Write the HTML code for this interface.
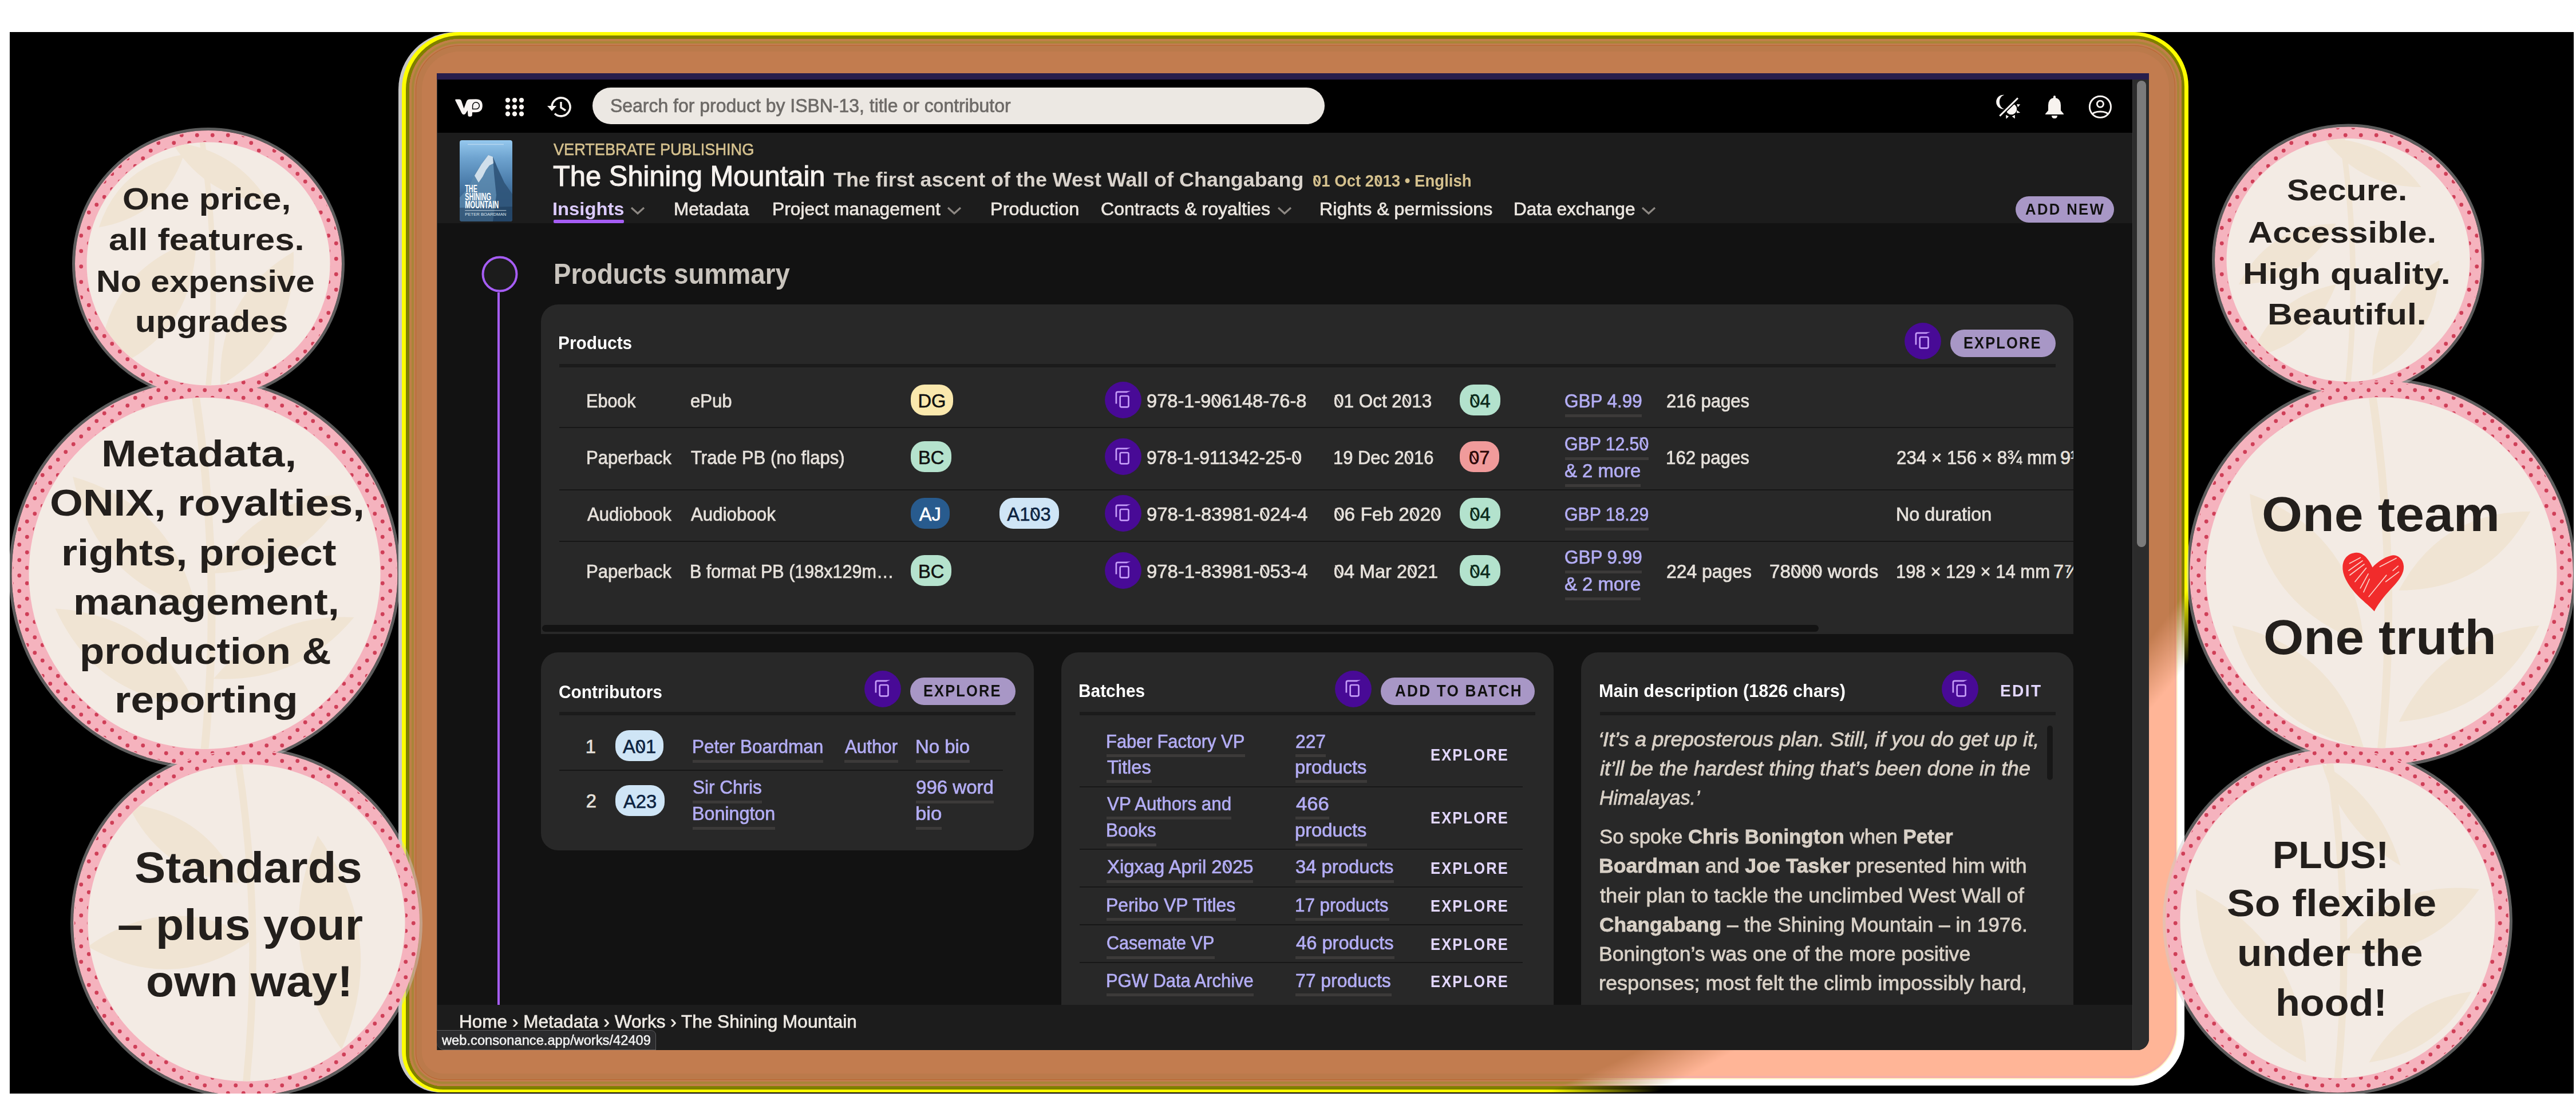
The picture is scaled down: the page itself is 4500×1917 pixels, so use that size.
<!DOCTYPE html>
<html><head><meta charset="utf-8"><title>Consonance</title>
<style>
html,body{margin:0;padding:0}
body{width:4500px;height:1917px;position:relative;overflow:hidden;background:#fff;font-family:"Liberation Sans",sans-serif}
.r,.t,.c{position:absolute}
.t{white-space:nowrap;transform-origin:0 0}
.c{white-space:nowrap}
b{font-weight:700}
.z{position:relative}
.z::after{content:"";position:absolute;left:0.255em;top:0.5em;width:0.075em;height:0.6em;margin-left:-0.0375em;margin-top:-0.3em;background:currentColor;transform:rotate(-33deg)}
</style></head><body>
<div class="r" style="left:17px;top:56px;width:4479px;height:1855px;background:#000"></div>
<div class="r" style="left:702px;top:56px;width:3121px;height:1853px;border-radius:100px 95px 70px 72px;background:#ffff00;box-shadow:-6px 0 0 rgba(220,220,220,0.9)"></div>
<div class="r" style="left:709px;top:62px;width:3107px;height:1842px;border-radius:94px 89px 64px 65px;background:#7f7f00"></div>
<div class="r" style="left:715px;top:68px;width:3096px;height:1830px;border-radius:88px 83px 58px 58px;background:#c27c4f;box-shadow:inset 0 0 0 4px #c08048, inset 0 0 0 8px #a98538, inset 0 0 0 11px #c27c4f, inset 0 0 0 12px #b8652f, inset 0 0 0 22px #bb7a4b"></div>
<div class="r" style="left:600px;top:0px;width:3300px;height:1917px;-webkit-mask-image:radial-gradient(circle 2694px at 1109px -511px, transparent 2614px, #000 2694px);mask-image:radial-gradient(circle 2694px at 1109px -511px, transparent 2614px, #000 2694px);">
<div class="r" style="left:96px;top:56px;width:3230px;height:1855px;background:#000"></div>
<div class="r" style="left:96px;top:56px;width:3120px;height:1841px;border-radius:90px;background:#fff"></div>
<div class="r" style="left:102px;top:60px;width:3102px;height:1826px;border-radius:86px;background:#fff6c8"></div>
<div class="r" style="left:104px;top:62px;width:3098px;height:1822px;border-radius:84px;background:#f7b0a6"></div>
<div class="r" style="left:108px;top:66px;width:3091px;height:1814px;border-radius:80px;background:#ffb597"></div>
</div>
<div class="r" style="left:763px;top:128px;width:2991px;height:1707px;background:#121212;border-bottom-right-radius:20px;overflow:hidden">
<div class="r" style="left:0.00px;top:0.00px;width:2991.00px;height:11.00px;background:#271e4c;"></div>
<div class="r" style="left:0.00px;top:11.00px;width:2991.00px;height:93.00px;background:#000;"></div>
<div class="r" style="left:0.00px;top:104.00px;width:2962.00px;height:158.00px;background:#1c1c1c;"></div>
<div class="r" style="left:0.00px;top:1628.00px;width:2962.00px;height:79.00px;background:#1c1c1c;"></div>
<div class="r" style="left:2962.00px;top:11.00px;width:29.00px;height:1696.00px;background:#2c2c2c;border-left:1px solid #383838;"></div>
<div class="r" style="left:2970.00px;top:13.00px;width:16.00px;height:815.00px;background:#7b7b7b;border-radius:8px;"></div>
<div class="r" style="left:0.00px;top:11.00px;width:1.00px;height:1696.00px;background:#3a3a3a;"></div>
</div>
<svg class="r" style="left:793px;top:170px" width="54" height="38" viewBox="0 0 54 38"><path d="M2.6 6 Q1.2 3.6 4 3.6 L9.5 3.6 Q12 3.6 13 6.2 L17.4 19.6 L21.8 7.6 Q23.4 3.4 27.5 3.4 L38.5 3.3 Q49.8 3.3 49.8 14.8 Q49.8 26.2 38 26.2 L32 26.2 L31.8 31 Q31.6 33.8 28.6 33.8 L27 33.8 Q24.6 33.8 24.4 31 L23.8 22.9 L20.3 28.6 Q19 30.4 16.8 30.2 Q14.6 30 13.6 27.8 Z" fill="#f8f4f2"/><path d="M32.6 20.6 L32.6 14.6 A5.9 5.9 0 1 1 38.5 20.6 Z" fill="none" stroke="#000" stroke-width="1.5"/></svg>
<svg class="r" style="left:883px;top:171px" width="34" height="34" viewBox="0 0 34 34" fill="#f7f3ef"><circle cx="4" cy="4" r="4.2"/><circle cx="4" cy="16" r="4.2"/><circle cx="4" cy="28" r="4.2"/><circle cx="16" cy="4" r="4.2"/><circle cx="16" cy="16" r="4.2"/><circle cx="16" cy="28" r="4.2"/><circle cx="28" cy="4" r="4.2"/><circle cx="28" cy="16" r="4.2"/><circle cx="28" cy="28" r="4.2"/></svg>
<svg class="r" style="left:955px;top:167px" width="46" height="40" viewBox="0 0 46 40"><path d="M9 20 A16 16 0 1 1 14 31.5" fill="none" stroke="#f7f3ef" stroke-width="3.6"/><path d="M1 18 L9 27 L17 18 Z" fill="#f7f3ef"/><path d="M25 11 L25 21 L33 26" fill="none" stroke="#f7f3ef" stroke-width="3.4"/></svg>
<div class="r" style="left:1035.00px;top:153.00px;width:1279.00px;height:64.00px;background:#ece8e3;border-radius:32px;"></div>
<div id="t1" class="t" style="left:1066.03px;top:167.66px;font-size:32.994px;line-height:32.994px;color:#6d6a67;font-weight:400;transform:scaleX(0.9685);-webkit-text-stroke-width:0.73px;"><span>Search for product by ISBN-13, title or contributor</span></div>
<svg class="r" style="left:3485px;top:163px" width="48" height="48" viewBox="0 0 48 48"><path d="M16.2 2.8 A12.45 12.45 0 1 0 16.2 27.5 A13.28 13.28 0 0 1 16.2 2.8 Z" fill="#f8f4f2"/><clipPath id="sunc"><path d="M10.4 41.7 L42.1 10.5 L60 30 L30 60 Z"/></clipPath><circle cx="28.6" cy="27.6" r="9.6" fill="#f8f4f2" clip-path="url(#sunc)"/><path d="M8.3 39.6 L40 8.4" stroke="#000" stroke-width="6.4"/><path d="M8.3 39.6 L40 8.4" stroke="#f8f4f2" stroke-width="2.9"/><path d="M38.1 19.1 L44.2 19.6 L40 24.3 Z M38.1 29.4 L44.2 34 L38.1 34.5 Z M19 37.8 L24.1 40.6 L19.5 44.8 Z M29.7 40.6 L34.8 37.8 L34.8 44.3 Z" fill="#f8f4f2"/></svg>
<svg class="r" style="left:3571px;top:166px" width="36" height="42" viewBox="0 0 36 42"><path d="M18 1 Q20 1 20 3 L20 5 Q29 7 29 18 L29 27 L34 33 L34 34 L2 34 L2 33 L7 27 L7 18 Q7 7 16 5 L16 3 Q16 1 18 1 Z" fill="#f7f3ef"/><path d="M13 36 L23 36 Q23 41 18 41 Q13 41 13 36 Z" fill="#f7f3ef"/></svg>
<svg class="r" style="left:3646px;top:165px" width="46" height="44" viewBox="0 0 46 44"><defs><clipPath id="ucl"><circle cx="22.9" cy="21.8" r="18.6"/></clipPath></defs><circle cx="22.9" cy="21.8" r="18.6" fill="none" stroke="#f8f4f2" stroke-width="2.9"/><circle cx="22.9" cy="16.7" r="5.6" fill="none" stroke="#f8f4f2" stroke-width="2.9"/><ellipse cx="22.9" cy="35.2" rx="13.8" ry="5.2" fill="none" stroke="#f8f4f2" stroke-width="2.9" clip-path="url(#ucl)"/></svg>
<div class="r" style="left:803px;top:245px;width:92px;height:142px;border-radius:4px;overflow:hidden;background:linear-gradient(180deg,#95c8ee 0%,#6ea3cf 22%,#4d7fad 50%,#345f8a 75%,#21456a 100%)"><svg width="92" height="142" viewBox="0 0 92 142" style="position:absolute;left:0;top:0"><path d="M0 142 L0 100 L15 84 L28 56 L42 36 L50 26 L58 29 L66 48 L78 74 L92 94 L92 142 Z" fill="#5d89ae" opacity="0.8"/><path d="M26 62 L38 42 L50 26 L58 29 L60 40 L52 44 L46 52 L40 64 L33 74 Z" fill="#e4edf5" opacity="0.85"/><path d="M58 29 L66 48 L78 74 L92 94 L92 142 L58 142 L64 96 L60 58 Z" fill="#24486d" opacity="0.75"/><path d="M0 118 L92 116 L92 142 L0 142 Z" fill="#183250" opacity="0.45"/><rect x="14" y="6.5" width="63" height="1.6" fill="#d6e6f4" opacity="0.55"/><text x="9.3" y="90.5" font-family="Liberation Sans" font-weight="700" font-size="17.5" fill="#fff" textLength="21.5" lengthAdjust="spacingAndGlyphs">THE</text><text x="9.3" y="105" font-family="Liberation Sans" font-weight="700" font-size="17.5" fill="#fff" textLength="45.7" lengthAdjust="spacingAndGlyphs">SHINING</text><text x="9.3" y="119" font-family="Liberation Sans" font-weight="700" font-size="17.5" fill="#fff" textLength="59" lengthAdjust="spacingAndGlyphs">MOUNTAIN</text><rect x="9.3" y="122" width="72" height="1.5" fill="#dfe8f0" opacity="0.6"/><text x="9.3" y="132" font-family="Liberation Sans" font-size="7" fill="#dfe8f0" textLength="72" lengthAdjust="spacingAndGlyphs">PETER BOARDMAN</text></svg></div>
<div id="t2" class="t" style="left:967.00px;top:246.79px;font-size:29.070px;line-height:29.070px;color:#d5c18e;font-weight:400;transform:scaleX(0.9336);-webkit-text-stroke-width:0.64px;"><span>VERTEBRATE PUBLISHING</span></div>
<div id="t3" class="t" style="left:966.02px;top:284.39px;font-size:49.855px;line-height:49.855px;color:#f6f2ee;font-weight:400;transform:scaleX(0.9805);-webkit-text-stroke:1.1px #f6f2ee;"><span>The Shining Mountain</span></div>
<div id="t4" class="t" style="left:1456.00px;top:297.06px;font-size:34.884px;line-height:34.884px;color:#d9d3cc;font-weight:700;transform:scaleX(1.0289);"><span>The first ascent of the West Wall of Changabang</span></div>
<div id="t5" class="t" style="left:2293.05px;top:302.39px;font-size:29.070px;line-height:29.070px;color:#d5c18e;font-weight:700;transform:scaleX(0.9478);"><span><span class="z">0</span>1 Oct 2<span class="z">0</span>13 • English</span></div>
<div id="t6" class="t" style="left:964.91px;top:349.92px;font-size:31.395px;line-height:31.395px;color:#dccbff;font-weight:700;transform:scaleX(1.0439);"><span>Insights</span></div>
<div class="r" style="left:967.00px;top:384.00px;width:123.00px;height:6.00px;background:#a65df5;border-radius:2px;"></div>
<svg class="r" style="left:1101px;top:360px" width="26" height="16" viewBox="0 0 26 16"><path d="M2 3 L13 13 L24 3" fill="none" stroke="#8d8883" stroke-width="3.2"/></svg>
<div id="t7" class="t" style="left:1177.49px;top:349.92px;font-size:31.395px;line-height:31.395px;color:#ebe6e0;font-weight:400;transform:scaleX(1.0048);-webkit-text-stroke-width:0.69px;"><span>Metadata</span></div>
<div id="t8" class="t" style="left:1348.97px;top:349.92px;font-size:31.395px;line-height:31.395px;color:#ebe6e0;font-weight:400;transform:scaleX(1.0147);-webkit-text-stroke-width:0.69px;"><span>Project management</span></div>
<svg class="r" style="left:1654px;top:360px" width="26" height="16" viewBox="0 0 26 16"><path d="M2 3 L13 13 L24 3" fill="none" stroke="#8d8883" stroke-width="3.2"/></svg>
<div id="t9" class="t" style="left:1729.93px;top:349.92px;font-size:31.395px;line-height:31.395px;color:#ebe6e0;font-weight:400;transform:scaleX(1.0358);-webkit-text-stroke-width:0.69px;"><span>Production</span></div>
<div id="t10" class="t" style="left:1923.48px;top:349.92px;font-size:31.395px;line-height:31.395px;color:#ebe6e0;font-weight:400;transform:scaleX(1.0224);-webkit-text-stroke-width:0.69px;"><span>Contracts &amp; royalties</span></div>
<svg class="r" style="left:2231px;top:360px" width="26" height="16" viewBox="0 0 26 16"><path d="M2 3 L13 13 L24 3" fill="none" stroke="#8d8883" stroke-width="3.2"/></svg>
<div id="t11" class="t" style="left:2304.95px;top:349.92px;font-size:31.395px;line-height:31.395px;color:#ebe6e0;font-weight:400;transform:scaleX(1.0260);-webkit-text-stroke-width:0.69px;"><span>Rights &amp; permissions</span></div>
<div id="t12" class="t" style="left:2643.99px;top:349.92px;font-size:31.395px;line-height:31.395px;color:#ebe6e0;font-weight:400;transform:scaleX(1.0066);-webkit-text-stroke-width:0.69px;"><span>Data exchange</span></div>
<svg class="r" style="left:2867px;top:360px" width="26" height="16" viewBox="0 0 26 16"><path d="M2 3 L13 13 L24 3" fill="none" stroke="#8d8883" stroke-width="3.2"/></svg>
<div class="r" style="left:3521.00px;top:343.00px;width:172.00px;height:46.00px;background:#a897c6;border-radius:23px;"></div>
<div id="t13" class="t" style="left:3537.60px;top:352.93px;font-size:26.890px;line-height:26.890px;color:#121212;font-weight:700;letter-spacing:2.50px;transform:scaleX(0.9539);"><span>ADD NEW</span></div>
<svg class="r" style="left:835px;top:441px" width="76" height="76" viewBox="0 0 76 76"><circle cx="38" cy="38" r="29.5" fill="#1c1c1c" stroke="#a65df5" stroke-width="4"/></svg>
<div class="r" style="left:869.00px;top:511.00px;width:4.00px;height:1245.00px;background:#a65df5;"></div>
<div id="t14" class="t" style="left:966.91px;top:453.93px;font-size:50.872px;line-height:50.872px;color:#c9c4bd;font-weight:700;transform:scaleX(0.8959);"><span>Products summary</span></div>
<div class="r" style="left:945px;top:532px;width:2677px;height:576px;background:#282828;border-radius:30px 30px 0 0;overflow:hidden">
<div id="t15" class="t" style="left:30.14px;top:50.53px;font-size:31.977px;line-height:31.977px;color:#ffffff;font-weight:700;transform:scaleX(0.9324);"><span>Products</span></div>
<svg class="r" style="left:2381.6px;top:31.6px" width="64" height="64" viewBox="0 0 64 64"><circle cx="32" cy="32" r="31.9" fill="#480a96"/><path d="M19.9 38.6 V20.6 Q19.9 17.9 22.6 17.9 H38.5" fill="none" stroke="#c59cf8" stroke-width="2.7"/><path d="M38 16.55 L45 16.3 L38 19.25 Z" fill="#c59cf8"/><rect x="26.7" y="25" width="14.8" height="19.3" rx="2.2" fill="none" stroke="#c59cf8" stroke-width="2.7"/></svg>
<div class="r" style="left:2462.00px;top:44.00px;width:184.00px;height:48.00px;background:#a897c6;border-radius:24px;"></div>
<div id="t16" class="t" style="left:2485.29px;top:51.77px;font-size:29.797px;line-height:29.797px;color:#121212;font-weight:700;letter-spacing:2.50px;transform:scaleX(0.8546);"><span>EXPLORE</span></div>
<div class="r" style="left:32.00px;top:104.00px;width:2614.00px;height:5.50px;background:#1b1b1b;"></div>
<div class="r" style="left:32.00px;top:213.50px;width:2645.00px;height:2.20px;background:#171717;"></div>
<div class="r" style="left:32.00px;top:322.50px;width:2645.00px;height:2.20px;background:#171717;"></div>
<div class="r" style="left:32.00px;top:413.00px;width:2645.00px;height:2.20px;background:#171717;"></div>
<div class="r" style="left:2.00px;top:560.00px;width:2230.00px;height:12.00px;background:#131313;border-radius:6px;"></div>
<div id="t17" class="t" style="left:79.13px;top:153.11px;font-size:32.703px;line-height:32.703px;color:#e6e1db;font-weight:400;transform:scaleX(0.9349);-webkit-text-stroke-width:0.72px;"><span>Ebook</span></div>
<div id="t18" class="t" style="left:260.55px;top:153.11px;font-size:32.703px;line-height:32.703px;color:#e6e1db;font-weight:400;transform:scaleX(0.9506);-webkit-text-stroke-width:0.72px;"><span>ePub</span></div>
<div class="r" style="left:646.00px;top:140.00px;width:74.00px;height:54.00px;background:#fae8ad;border-radius:24px;"></div><div class="c" style="left:646.0px;top:152.9px;width:74.0px;font-size:32.70px;line-height:32.70px;color:#111;text-align:center;-webkit-text-stroke-width:0.6px">DG</div>
<svg class="r" style="left:985.0px;top:135.0px" width="64" height="64" viewBox="0 0 64 64"><circle cx="32" cy="32" r="31.9" fill="#480a96"/><path d="M19.9 38.6 V20.6 Q19.9 17.9 22.6 17.9 H38.5" fill="none" stroke="#c59cf8" stroke-width="2.7"/><path d="M38 16.55 L45 16.3 L38 19.25 Z" fill="#c59cf8"/><rect x="26.7" y="25" width="14.8" height="19.3" rx="2.2" fill="none" stroke="#c59cf8" stroke-width="2.7"/></svg>
<div id="t19" class="t" style="left:1058.00px;top:153.11px;font-size:32.703px;line-height:32.703px;color:#e6e1db;font-weight:400;transform:scaleX(0.9985);-webkit-text-stroke-width:0.72px;"><span>978-1-9<span class="z">0</span>6148-76-8</span></div>
<div id="t20" class="t" style="left:1384.64px;top:153.11px;font-size:32.703px;line-height:32.703px;color:#e6e1db;font-weight:400;transform:scaleX(0.9617);-webkit-text-stroke-width:0.72px;"><span><span class="z">0</span>1 Oct 2<span class="z">0</span>13</span></div>
<div class="r" style="left:1605.00px;top:140.00px;width:71.00px;height:54.00px;background:#b3e2cd;border-radius:24px;"></div><div class="c" style="left:1605.0px;top:152.9px;width:71.0px;font-size:32.70px;line-height:32.70px;color:#0b2a1b;text-align:center;-webkit-text-stroke-width:0.6px"><span class="z">0</span>4</div>
<div id="t21" class="t" style="left:1787.84px;top:153.11px;font-size:32.703px;line-height:32.703px;color:#b3adf4;font-weight:400;transform:scaleX(0.9614);-webkit-text-stroke-width:0.72px;"><span>GBP 4.99</span></div>
<div class="r" style="left:1788.80px;top:191.80px;width:134.60px;height:5.00px;background:#3c3a39;"></div>
<div id="t22" class="t" style="left:1966.05px;top:153.11px;font-size:32.703px;line-height:32.703px;color:#e6e1db;font-weight:400;transform:scaleX(0.9495);-webkit-text-stroke-width:0.72px;"><span>216 pages</span></div>
<div id="t23" class="t" style="left:79.10px;top:252.31px;font-size:32.703px;line-height:32.703px;color:#e6e1db;font-weight:400;transform:scaleX(0.9520);-webkit-text-stroke-width:0.72px;"><span>Paperback</span></div>
<div id="t24" class="t" style="left:261.50px;top:252.31px;font-size:32.703px;line-height:32.703px;color:#e6e1db;font-weight:400;transform:scaleX(0.9521);-webkit-text-stroke-width:0.72px;"><span>Trade PB (no flaps)</span></div>
<div class="r" style="left:646.00px;top:239.20px;width:71.40px;height:54.00px;background:#b5e2cd;border-radius:24px;"></div><div class="c" style="left:646.0px;top:252.1px;width:71.4px;font-size:32.70px;line-height:32.70px;color:#111;text-align:center;-webkit-text-stroke-width:0.6px">BC</div>
<svg class="r" style="left:985.0px;top:234.2px" width="64" height="64" viewBox="0 0 64 64"><circle cx="32" cy="32" r="31.9" fill="#480a96"/><path d="M19.9 38.6 V20.6 Q19.9 17.9 22.6 17.9 H38.5" fill="none" stroke="#c59cf8" stroke-width="2.7"/><path d="M38 16.55 L45 16.3 L38 19.25 Z" fill="#c59cf8"/><rect x="26.7" y="25" width="14.8" height="19.3" rx="2.2" fill="none" stroke="#c59cf8" stroke-width="2.7"/></svg>
<div id="t25" class="t" style="left:1058.02px;top:252.31px;font-size:32.703px;line-height:32.703px;color:#e6e1db;font-weight:400;transform:scaleX(0.9772);-webkit-text-stroke-width:0.72px;"><span>978-1-911342-25-<span class="z">0</span></span></div>
<div id="t26" class="t" style="left:1383.71px;top:252.31px;font-size:32.703px;line-height:32.703px;color:#e6e1db;font-weight:400;transform:scaleX(0.9462);-webkit-text-stroke-width:0.72px;"><span>19 Dec 2<span class="z">0</span>16</span></div>
<div class="r" style="left:1605.00px;top:239.20px;width:68.50px;height:54.00px;background:#f09b9b;border-radius:24px;"></div><div class="c" style="left:1605.0px;top:252.1px;width:68.5px;font-size:32.70px;line-height:32.70px;color:#2a0707;text-align:center;-webkit-text-stroke-width:0.6px"><span class="z">0</span>7</div>
<div id="t27" class="t" style="left:1787.88px;top:227.81px;font-size:32.703px;line-height:32.703px;color:#b3adf4;font-weight:400;transform:scaleX(0.9240);-webkit-text-stroke-width:0.72px;"><span>GBP 12.5<span class="z">0</span></span></div>
<div class="r" style="left:1788.80px;top:266.50px;width:146.20px;height:5.00px;background:#3c3a39;"></div>
<div id="t28" class="t" style="left:1787.79px;top:274.81px;font-size:32.703px;line-height:32.703px;color:#b3adf4;font-weight:400;transform:scaleX(1.0050);-webkit-text-stroke-width:0.72px;"><span>&amp; 2 more</span></div>
<div class="r" style="left:1788.80px;top:313.50px;width:132.10px;height:5.00px;background:#3c3a39;"></div>
<div id="t29" class="t" style="left:1965.09px;top:252.31px;font-size:32.703px;line-height:32.703px;color:#e6e1db;font-weight:400;transform:scaleX(0.9558);-webkit-text-stroke-width:0.72px;"><span>162 pages</span></div>
<div id="t30" class="t" style="left:2368.04px;top:252.31px;font-size:32.703px;line-height:32.703px;color:#e6e1db;font-weight:400;transform:scaleX(0.9575);-webkit-text-stroke-width:0.72px;"><span>234 × 156 × 8¾ mm</span></div>
<div id="t31" class="t" style="left:2654.00px;top:252.31px;font-size:32.703px;line-height:32.703px;color:#e6e1db;font-weight:400;-webkit-text-stroke-width:0.72px;"><span>9½</span></div>
<div id="t32" class="t" style="left:81.00px;top:351.11px;font-size:32.703px;line-height:32.703px;color:#e6e1db;font-weight:400;transform:scaleX(0.9508);-webkit-text-stroke-width:0.72px;"><span>Audiobook</span></div>
<div id="t33" class="t" style="left:261.50px;top:351.11px;font-size:32.703px;line-height:32.703px;color:#e6e1db;font-weight:400;transform:scaleX(0.9572);-webkit-text-stroke-width:0.72px;"><span>Audiobook</span></div>
<div class="r" style="left:646.00px;top:338.00px;width:67.50px;height:54.00px;background:#285b8e;border-radius:24px;"></div><div class="c" style="left:646.0px;top:350.9px;width:67.5px;font-size:32.70px;line-height:32.70px;color:#fff;text-align:center;-webkit-text-stroke-width:0.6px">AJ</div>
<div class="r" style="left:800.50px;top:338.00px;width:104.10px;height:54.00px;background:#cfe5f6;border-radius:24px;"></div><div class="c" style="left:800.5px;top:350.9px;width:104.1px;font-size:32.70px;line-height:32.70px;color:#0d2340;text-align:center;-webkit-text-stroke-width:0.6px">A1<span class="z">0</span>3</div>
<svg class="r" style="left:985.0px;top:333.0px" width="64" height="64" viewBox="0 0 64 64"><circle cx="32" cy="32" r="31.9" fill="#480a96"/><path d="M19.9 38.6 V20.6 Q19.9 17.9 22.6 17.9 H38.5" fill="none" stroke="#c59cf8" stroke-width="2.7"/><path d="M38 16.55 L45 16.3 L38 19.25 Z" fill="#c59cf8"/><rect x="26.7" y="25" width="14.8" height="19.3" rx="2.2" fill="none" stroke="#c59cf8" stroke-width="2.7"/></svg>
<div id="t34" class="t" style="left:1058.00px;top:351.11px;font-size:32.703px;line-height:32.703px;color:#e6e1db;font-weight:400;transform:scaleX(1.0046);-webkit-text-stroke-width:0.72px;"><span>978-1-83981-<span class="z">0</span>24-4</span></div>
<div id="t35" class="t" style="left:1384.58px;top:351.11px;font-size:32.703px;line-height:32.703px;color:#e6e1db;font-weight:400;transform:scaleX(1.0219);-webkit-text-stroke-width:0.72px;"><span><span class="z">0</span>6 Feb 2<span class="z">0</span>2<span class="z">0</span></span></div>
<div class="r" style="left:1605.00px;top:338.00px;width:71.00px;height:54.00px;background:#b3e2cd;border-radius:24px;"></div><div class="c" style="left:1605.0px;top:350.9px;width:71.0px;font-size:32.70px;line-height:32.70px;color:#0b2a1b;text-align:center;-webkit-text-stroke-width:0.6px"><span class="z">0</span>4</div>
<div id="t36" class="t" style="left:1787.88px;top:351.11px;font-size:32.703px;line-height:32.703px;color:#b3adf4;font-weight:400;transform:scaleX(0.9240);-webkit-text-stroke-width:0.72px;"><span>GBP 18.29</span></div>
<div class="r" style="left:1788.80px;top:389.80px;width:146.20px;height:5.00px;background:#3c3a39;"></div>
<div id="t37" class="t" style="left:2367.02px;top:351.11px;font-size:32.703px;line-height:32.703px;color:#e6e1db;font-weight:400;transform:scaleX(0.9890);-webkit-text-stroke-width:0.72px;"><span>No duration</span></div>
<div id="t38" class="t" style="left:79.10px;top:450.91px;font-size:32.703px;line-height:32.703px;color:#e6e1db;font-weight:400;transform:scaleX(0.9520);-webkit-text-stroke-width:0.72px;"><span>Paperback</span></div>
<div id="t39" class="t" style="left:259.63px;top:450.91px;font-size:32.703px;line-height:32.703px;color:#e6e1db;font-weight:400;transform:scaleX(0.9347);-webkit-text-stroke-width:0.72px;"><span>B format PB (198x129m…</span></div>
<div class="r" style="left:646.00px;top:437.80px;width:71.40px;height:54.00px;background:#b5e2cd;border-radius:24px;"></div><div class="c" style="left:646.0px;top:450.7px;width:71.4px;font-size:32.70px;line-height:32.70px;color:#111;text-align:center;-webkit-text-stroke-width:0.6px">BC</div>
<svg class="r" style="left:985.0px;top:432.8px" width="64" height="64" viewBox="0 0 64 64"><circle cx="32" cy="32" r="31.9" fill="#480a96"/><path d="M19.9 38.6 V20.6 Q19.9 17.9 22.6 17.9 H38.5" fill="none" stroke="#c59cf8" stroke-width="2.7"/><path d="M38 16.55 L45 16.3 L38 19.25 Z" fill="#c59cf8"/><rect x="26.7" y="25" width="14.8" height="19.3" rx="2.2" fill="none" stroke="#c59cf8" stroke-width="2.7"/></svg>
<div id="t40" class="t" style="left:1058.00px;top:450.91px;font-size:32.703px;line-height:32.703px;color:#e6e1db;font-weight:400;transform:scaleX(1.0046);-webkit-text-stroke-width:0.72px;"><span>978-1-83981-<span class="z">0</span>53-4</span></div>
<div id="t41" class="t" style="left:1384.61px;top:450.91px;font-size:32.703px;line-height:32.703px;color:#e6e1db;font-weight:400;transform:scaleX(0.9918);-webkit-text-stroke-width:0.72px;"><span><span class="z">0</span>4 Mar 2<span class="z">0</span>21</span></div>
<div class="r" style="left:1605.00px;top:437.80px;width:71.00px;height:54.00px;background:#b3e2cd;border-radius:24px;"></div><div class="c" style="left:1605.0px;top:450.7px;width:71.0px;font-size:32.70px;line-height:32.70px;color:#0b2a1b;text-align:center;-webkit-text-stroke-width:0.6px"><span class="z">0</span>4</div>
<div id="t42" class="t" style="left:1787.84px;top:426.41px;font-size:32.703px;line-height:32.703px;color:#b3adf4;font-weight:400;transform:scaleX(0.9614);-webkit-text-stroke-width:0.72px;"><span>GBP 9.99</span></div>
<div class="r" style="left:1788.80px;top:465.10px;width:134.60px;height:5.00px;background:#3c3a39;"></div>
<div id="t43" class="t" style="left:1787.79px;top:473.41px;font-size:32.703px;line-height:32.703px;color:#b3adf4;font-weight:400;transform:scaleX(1.0050);-webkit-text-stroke-width:0.72px;"><span>&amp; 2 more</span></div>
<div class="r" style="left:1788.80px;top:512.10px;width:132.10px;height:5.00px;background:#3c3a39;"></div>
<div id="t44" class="t" style="left:1966.02px;top:450.91px;font-size:32.703px;line-height:32.703px;color:#e6e1db;font-weight:400;transform:scaleX(0.9753);-webkit-text-stroke-width:0.72px;"><span>224 pages</span></div>
<div id="t45" class="t" style="left:2145.78px;top:450.91px;font-size:32.703px;line-height:32.703px;color:#e6e1db;font-weight:400;transform:scaleX(1.0169);-webkit-text-stroke-width:0.72px;"><span>78<span class="z">0</span><span class="z">0</span><span class="z">0</span> words</span></div>
<div id="t46" class="t" style="left:2367.10px;top:450.91px;font-size:32.703px;line-height:32.703px;color:#e6e1db;font-weight:400;transform:scaleX(0.9491);-webkit-text-stroke-width:0.72px;"><span>198 × 129 × 14 mm</span></div>
<div id="t47" class="t" style="left:2642.00px;top:450.91px;font-size:32.703px;line-height:32.703px;color:#e6e1db;font-weight:400;-webkit-text-stroke-width:0.72px;"><span>7⅞</span></div>
</div>
<div class="r" style="left:945px;top:1140px;width:861px;height:346px;background:#282828;border-radius:30px;overflow:hidden">
<div id="t48" class="t" style="left:31.07px;top:52.53px;font-size:31.977px;line-height:31.977px;color:#ffffff;font-weight:700;transform:scaleX(0.9344);"><span>Contributors</span></div>
<svg class="r" style="left:564.8px;top:31.8px" width="64" height="64" viewBox="0 0 64 64"><circle cx="32" cy="32" r="31.9" fill="#480a96"/><path d="M19.9 38.6 V20.6 Q19.9 17.9 22.6 17.9 H38.5" fill="none" stroke="#c59cf8" stroke-width="2.7"/><path d="M38 16.55 L45 16.3 L38 19.25 Z" fill="#c59cf8"/><rect x="26.7" y="25" width="14.8" height="19.3" rx="2.2" fill="none" stroke="#c59cf8" stroke-width="2.7"/></svg>
<div class="r" style="left:644.60px;top:44.00px;width:184.10px;height:47.50px;background:#a897c6;border-radius:24px;"></div>
<div id="t49" class="t" style="left:667.79px;top:52.27px;font-size:29.797px;line-height:29.797px;color:#121212;font-weight:700;letter-spacing:2.50px;transform:scaleX(0.8546);"><span>EXPLORE</span></div>
<div class="r" style="left:32.00px;top:104.30px;width:796.70px;height:5.30px;background:#1b1b1b;"></div>
<div class="r" style="left:32.00px;top:204.50px;width:774.50px;height:2.20px;background:#171717;"></div>
<div id="t50" class="t" style="left:77.70px;top:149.31px;font-size:32.703px;line-height:32.703px;color:#e6e1db;font-weight:400;-webkit-text-stroke-width:0.72px;"><span>1</span></div>
<div class="r" style="left:130.00px;top:136.30px;width:84.00px;height:54.00px;background:#cfe5f6;border-radius:24px;"></div><div class="c" style="left:130.0px;top:149.2px;width:84.0px;font-size:32.70px;line-height:32.70px;color:#0d2340;text-align:center;-webkit-text-stroke-width:0.6px">A<span class="z">0</span>1</div>
<div id="t51" class="t" style="left:263.57px;top:149.31px;font-size:32.703px;line-height:32.703px;color:#b3adf4;font-weight:400;transform:scaleX(0.9636);-webkit-text-stroke-width:0.72px;"><span>Peter Boardman</span></div><div class="r" style="left:264.50px;top:187.50px;width:228.30px;height:5.20px;background:#3c3a39;"></div>
<div id="t52" class="t" style="left:531.00px;top:149.31px;font-size:32.703px;line-height:32.703px;color:#b3adf4;font-weight:400;transform:scaleX(0.9572);-webkit-text-stroke-width:0.72px;"><span>Author</span></div><div class="r" style="left:530.00px;top:187.50px;width:94.30px;height:5.20px;background:#3c3a39;"></div>
<div id="t53" class="t" style="left:653.99px;top:149.31px;font-size:32.703px;line-height:32.703px;color:#b3adf4;font-weight:400;transform:scaleX(1.0074);-webkit-text-stroke-width:0.72px;"><span>No bio</span></div><div class="r" style="left:655.00px;top:187.50px;width:94.00px;height:5.20px;background:#3c3a39;"></div>
<div id="t54" class="t" style="left:78.70px;top:244.01px;font-size:32.703px;line-height:32.703px;color:#e6e1db;font-weight:400;-webkit-text-stroke-width:0.72px;"><span>2</span></div>
<div class="r" style="left:130.00px;top:232.30px;width:86.00px;height:54.00px;background:#cfe5f6;border-radius:24px;"></div><div class="c" style="left:130.0px;top:245.2px;width:86.0px;font-size:32.70px;line-height:32.70px;color:#0d2340;text-align:center;-webkit-text-stroke-width:0.6px">A23</div>
<div id="t55" class="t" style="left:264.54px;top:220.31px;font-size:32.703px;line-height:32.703px;color:#b3adf4;font-weight:400;transform:scaleX(0.9640);-webkit-text-stroke-width:0.72px;"><span>Sir Chris</span></div><div class="r" style="left:264.50px;top:258.50px;width:121.50px;height:5.20px;background:#3c3a39;"></div>
<div id="t56" class="t" style="left:263.53px;top:266.31px;font-size:32.703px;line-height:32.703px;color:#b3adf4;font-weight:400;transform:scaleX(0.9864);-webkit-text-stroke-width:0.72px;"><span>Bonington</span></div><div class="r" style="left:264.50px;top:304.50px;width:144.10px;height:5.20px;background:#3c3a39;"></div>
<div id="t57" class="t" style="left:654.99px;top:220.31px;font-size:32.703px;line-height:32.703px;color:#b3adf4;font-weight:400;transform:scaleX(1.0113);-webkit-text-stroke-width:0.72px;"><span>996 word</span></div><div class="r" style="left:655.00px;top:258.50px;width:135.80px;height:5.20px;background:#3c3a39;"></div>
<div id="t58" class="t" style="left:653.87px;top:266.31px;font-size:32.703px;line-height:32.703px;color:#b3adf4;font-weight:400;transform:scaleX(1.0632);-webkit-text-stroke-width:0.72px;"><span>bio</span></div><div class="r" style="left:655.00px;top:304.50px;width:45.00px;height:5.20px;background:#3c3a39;"></div>
</div>
<div class="r" style="left:1854px;top:1140px;width:860px;height:616px;background:#282828;border-radius:30px 30px 0 0;overflow:hidden">
<div id="t59" class="t" style="left:30.13px;top:50.93px;font-size:31.977px;line-height:31.977px;color:#ffffff;font-weight:700;transform:scaleX(0.9341);"><span>Batches</span></div>
<svg class="r" style="left:477.8px;top:32.2px" width="64" height="64" viewBox="0 0 64 64"><circle cx="32" cy="32" r="31.9" fill="#480a96"/><path d="M19.9 38.6 V20.6 Q19.9 17.9 22.6 17.9 H38.5" fill="none" stroke="#c59cf8" stroke-width="2.7"/><path d="M38 16.55 L45 16.3 L38 19.25 Z" fill="#c59cf8"/><rect x="26.7" y="25" width="14.8" height="19.3" rx="2.2" fill="none" stroke="#c59cf8" stroke-width="2.7"/></svg>
<div class="r" style="left:558.40px;top:44.00px;width:269.10px;height:47.50px;background:#a897c6;border-radius:24px;"></div>
<div id="t60" class="t" style="left:582.90px;top:52.27px;font-size:29.797px;line-height:29.797px;color:#121212;font-weight:700;letter-spacing:2.50px;transform:scaleX(0.8780);"><span>ADD TO BATCH</span></div>
<div class="r" style="left:32.00px;top:104.30px;width:795.50px;height:5.30px;background:#1b1b1b;"></div>
<div class="r" style="left:32.00px;top:234.00px;width:773.50px;height:2.20px;background:#171717;"></div>
<div class="r" style="left:32.00px;top:343.00px;width:773.50px;height:2.20px;background:#171717;"></div>
<div class="r" style="left:32.00px;top:409.30px;width:773.50px;height:2.20px;background:#171717;"></div>
<div class="r" style="left:32.00px;top:474.60px;width:773.50px;height:2.20px;background:#171717;"></div>
<div class="r" style="left:32.00px;top:541.00px;width:773.50px;height:2.20px;background:#171717;"></div>
<div id="t61" class="t" style="left:78.11px;top:140.01px;font-size:32.703px;line-height:32.703px;color:#b3adf4;font-weight:400;transform:scaleX(0.9462);-webkit-text-stroke-width:0.72px;"><span>Faber Factory VP</span></div><div class="r" style="left:79.00px;top:178.20px;width:241.70px;height:5.20px;background:#3c3a39;"></div>
<div id="t62" class="t" style="left:80.00px;top:184.91px;font-size:32.703px;line-height:32.703px;color:#b3adf4;font-weight:400;transform:scaleX(0.9994);-webkit-text-stroke-width:0.72px;"><span>Titles</span></div><div class="r" style="left:79.00px;top:223.10px;width:78.50px;height:5.20px;background:#3c3a39;"></div>
<div id="t63" class="t" style="left:409.43px;top:140.01px;font-size:32.703px;line-height:32.703px;color:#b3adf4;font-weight:400;transform:scaleX(0.9720);-webkit-text-stroke-width:0.72px;"><span>227</span></div><div class="r" style="left:409.40px;top:178.20px;width:52.90px;height:5.20px;background:#3c3a39;"></div>
<div id="t64" class="t" style="left:408.40px;top:184.91px;font-size:32.703px;line-height:32.703px;color:#b3adf4;font-weight:400;transform:scaleX(1.0006);-webkit-text-stroke-width:0.72px;"><span>products</span></div><div class="r" style="left:409.40px;top:223.10px;width:125.10px;height:5.20px;background:#3c3a39;"></div>
<div id="t65" class="t" style="left:645.29px;top:164.17px;font-size:29.797px;line-height:29.797px;color:#e3d7ff;font-weight:700;letter-spacing:2.50px;transform:scaleX(0.8572);"><span>EXPLORE</span></div>
<div id="t66" class="t" style="left:80.00px;top:249.11px;font-size:32.703px;line-height:32.703px;color:#b3adf4;font-weight:400;transform:scaleX(0.9584);-webkit-text-stroke-width:0.72px;"><span>VP Authors and</span></div><div class="r" style="left:79.00px;top:287.30px;width:218.00px;height:5.20px;background:#3c3a39;"></div>
<div id="t67" class="t" style="left:78.07px;top:295.31px;font-size:32.703px;line-height:32.703px;color:#b3adf4;font-weight:400;transform:scaleX(0.9637);-webkit-text-stroke-width:0.72px;"><span>Books</span></div><div class="r" style="left:79.00px;top:333.50px;width:87.30px;height:5.20px;background:#3c3a39;"></div>
<div id="t68" class="t" style="left:410.40px;top:249.11px;font-size:32.703px;line-height:32.703px;color:#b3adf4;font-weight:400;transform:scaleX(1.0606);-webkit-text-stroke-width:0.72px;"><span>466</span></div><div class="r" style="left:409.40px;top:287.30px;width:58.60px;height:5.20px;background:#3c3a39;"></div>
<div id="t69" class="t" style="left:408.40px;top:295.31px;font-size:32.703px;line-height:32.703px;color:#b3adf4;font-weight:400;transform:scaleX(1.0006);-webkit-text-stroke-width:0.72px;"><span>products</span></div><div class="r" style="left:409.40px;top:333.50px;width:125.10px;height:5.20px;background:#3c3a39;"></div>
<div id="t70" class="t" style="left:645.29px;top:273.77px;font-size:29.797px;line-height:29.797px;color:#e3d7ff;font-weight:700;letter-spacing:2.50px;transform:scaleX(0.8572);"><span>EXPLORE</span></div>
<div id="t71" class="t" style="left:80.00px;top:359.31px;font-size:32.703px;line-height:32.703px;color:#b3adf4;font-weight:400;transform:scaleX(1.0037);-webkit-text-stroke-width:0.72px;"><span>Xigxag April 2<span class="z">0</span>25</span></div><div class="r" style="left:79.00px;top:397.50px;width:256.20px;height:5.20px;background:#3c3a39;"></div>
<div id="t72" class="t" style="left:409.40px;top:359.31px;font-size:32.703px;line-height:32.703px;color:#b3adf4;font-weight:400;transform:scaleX(1.0037);-webkit-text-stroke-width:0.72px;"><span>34 products</span></div><div class="r" style="left:409.40px;top:397.50px;width:172.10px;height:5.20px;background:#3c3a39;"></div>
<div id="t73" class="t" style="left:645.29px;top:361.77px;font-size:29.797px;line-height:29.797px;color:#e3d7ff;font-weight:700;letter-spacing:2.50px;transform:scaleX(0.8572);"><span>EXPLORE</span></div>
<div id="t74" class="t" style="left:78.05px;top:425.91px;font-size:32.703px;line-height:32.703px;color:#b3adf4;font-weight:400;transform:scaleX(0.9755);-webkit-text-stroke-width:0.72px;"><span>Peribo VP Titles</span></div><div class="r" style="left:79.00px;top:464.10px;width:226.00px;height:5.20px;background:#3c3a39;"></div>
<div id="t75" class="t" style="left:408.49px;top:425.91px;font-size:32.703px;line-height:32.703px;color:#b3adf4;font-weight:400;transform:scaleX(0.9569);-webkit-text-stroke-width:0.72px;"><span>17 products</span></div><div class="r" style="left:409.40px;top:464.10px;width:163.20px;height:5.20px;background:#3c3a39;"></div>
<div id="t76" class="t" style="left:645.29px;top:428.37px;font-size:29.797px;line-height:29.797px;color:#e3d7ff;font-weight:700;letter-spacing:2.50px;transform:scaleX(0.8572);"><span>EXPLORE</span></div>
<div id="t77" class="t" style="left:79.07px;top:492.31px;font-size:32.703px;line-height:32.703px;color:#b3adf4;font-weight:400;transform:scaleX(0.9336);-webkit-text-stroke-width:0.72px;"><span>Casemate VP</span></div><div class="r" style="left:79.00px;top:530.50px;width:188.60px;height:5.20px;background:#3c3a39;"></div>
<div id="t78" class="t" style="left:410.40px;top:492.31px;font-size:32.703px;line-height:32.703px;color:#b3adf4;font-weight:400;transform:scaleX(0.9990);-webkit-text-stroke-width:0.72px;"><span>46 products</span></div><div class="r" style="left:409.40px;top:530.50px;width:172.30px;height:5.20px;background:#3c3a39;"></div>
<div id="t79" class="t" style="left:645.29px;top:494.77px;font-size:29.797px;line-height:29.797px;color:#e3d7ff;font-weight:700;letter-spacing:2.50px;transform:scaleX(0.8572);"><span>EXPLORE</span></div>
<div id="t80" class="t" style="left:78.11px;top:557.71px;font-size:32.703px;line-height:32.703px;color:#b3adf4;font-weight:400;transform:scaleX(0.9458);-webkit-text-stroke-width:0.72px;"><span>PGW Data Archive</span></div><div class="r" style="left:79.00px;top:595.90px;width:256.70px;height:5.20px;background:#3c3a39;"></div>
<div id="t81" class="t" style="left:409.42px;top:557.71px;font-size:32.703px;line-height:32.703px;color:#b3adf4;font-weight:400;transform:scaleX(0.9760);-webkit-text-stroke-width:0.72px;"><span>77 products</span></div><div class="r" style="left:409.40px;top:595.90px;width:167.40px;height:5.20px;background:#3c3a39;"></div>
<div id="t82" class="t" style="left:645.29px;top:560.17px;font-size:29.797px;line-height:29.797px;color:#e3d7ff;font-weight:700;letter-spacing:2.50px;transform:scaleX(0.8572);"><span>EXPLORE</span></div>
</div>
<div class="r" style="left:2762px;top:1140px;width:860px;height:616px;background:#282828;border-radius:30px 30px 0 0;overflow:hidden">
<div id="t83" class="t" style="left:31.08px;top:50.93px;font-size:31.977px;line-height:31.977px;color:#ffffff;font-weight:700;transform:scaleX(0.9587);"><span>Main description (1826 chars)</span></div>
<svg class="r" style="left:630.3px;top:32.0px" width="64" height="64" viewBox="0 0 64 64"><circle cx="32" cy="32" r="31.9" fill="#480a96"/><path d="M19.9 38.6 V20.6 Q19.9 17.9 22.6 17.9 H38.5" fill="none" stroke="#c59cf8" stroke-width="2.7"/><path d="M38 16.55 L45 16.3 L38 19.25 Z" fill="#c59cf8"/><rect x="26.7" y="25" width="14.8" height="19.3" rx="2.2" fill="none" stroke="#c59cf8" stroke-width="2.7"/></svg>
<div id="t84" class="t" style="left:732.11px;top:52.27px;font-size:29.797px;line-height:29.797px;color:#e3d7ff;font-weight:700;letter-spacing:2.50px;transform:scaleX(0.9432);"><span>EDIT</span></div>
<div class="r" style="left:33.00px;top:104.30px;width:796.00px;height:5.30px;background:#1b1b1b;"></div>
<div class="r" style="left:813.50px;top:128.40px;width:10.90px;height:94.60px;background:#171717;border-radius:5px;"></div>
<div id="t85" class="t" style="left:29.92px;top:133.80px;font-size:35.320px;line-height:35.320px;color:#d9d1c7;font-weight:400;font-style:italic;transform:scaleX(1.0282);-webkit-text-stroke-width:0.78px;"><span>‘It’s a preposterous plan. Still, if you do get up it,</span></div>
<div id="t86" class="t" style="left:33.00px;top:184.80px;font-size:35.320px;line-height:35.320px;color:#d9d1c7;font-weight:400;font-style:italic;transform:scaleX(1.0305);-webkit-text-stroke-width:0.78px;"><span>it’ll be the hardest thing that’s been done in the</span></div>
<div id="t87" class="t" style="left:32.04px;top:236.10px;font-size:35.320px;line-height:35.320px;color:#d9d1c7;font-weight:400;font-style:italic;transform:scaleX(0.9614);-webkit-text-stroke-width:0.78px;"><span>Himalayas.’</span></div>
<div id="t88" class="t" style="left:32.01px;top:303.90px;font-size:35.320px;line-height:35.320px;color:#d9d1c7;font-weight:400;transform:scaleX(0.9866);-webkit-text-stroke-width:0.78px;"><span>So spoke <b>Chris Bonington</b> when <b>Peter</b></span></div>
<div id="t89" class="t" style="left:30.98px;top:355.10px;font-size:35.320px;line-height:35.320px;color:#d9d1c7;font-weight:400;transform:scaleX(1.0086);-webkit-text-stroke-width:0.78px;"><span><b>Boardman</b> and <b>Joe Tasker</b> presented him with</span></div>
<div id="t90" class="t" style="left:33.00px;top:406.80px;font-size:35.320px;line-height:35.320px;color:#d9d1c7;font-weight:400;transform:scaleX(1.0255);-webkit-text-stroke-width:0.78px;"><span>their plan to tackle the unclimbed West Wall of</span></div>
<div id="t91" class="t" style="left:32.00px;top:458.10px;font-size:35.320px;line-height:35.320px;color:#d9d1c7;font-weight:400;transform:scaleX(0.9973);-webkit-text-stroke-width:0.78px;"><span><b>Changabang</b> – the Shining Mountain – in 1976.</span></div>
<div id="t92" class="t" style="left:30.98px;top:509.00px;font-size:35.320px;line-height:35.320px;color:#d9d1c7;font-weight:400;transform:scaleX(1.0094);-webkit-text-stroke-width:0.78px;"><span>Bonington’s was one of the more positive</span></div>
<div id="t93" class="t" style="left:30.96px;top:560.40px;font-size:35.320px;line-height:35.320px;color:#d9d1c7;font-weight:400;transform:scaleX(1.0215);-webkit-text-stroke-width:0.78px;"><span>responses; most felt the climb impossibly hard,</span></div>
</div>
<div id="t94" class="t" style="left:801.63px;top:1768.93px;font-size:31.977px;line-height:31.977px;color:#ede9e3;font-weight:400;transform:scaleX(0.9867);-webkit-text-stroke-width:0.70px;"><span>Home › Metadata › Works › The Shining Mountain</span></div>
<div class="r" style="left:763px;top:1800px;width:383px;height:35px;background:#2b2b2d;border:1.5px solid #5a5a5c;border-left:none;border-radius:0 9px 0 14px;box-sizing:border-box"></div>
<div id="t95" class="t" style="left:772.36px;top:1805.58px;font-size:24.709px;line-height:24.709px;color:#f2f2f2;font-weight:400;transform:scaleX(0.9599);-webkit-text-stroke-width:0.54px;"><span>web.consonance.app/works/42409</span></div>
<svg class="r" style="left:0;top:0" width="4500" height="1917" viewBox="0 0 4500 1917"><defs><pattern id="dots" patternUnits="userSpaceOnUse" width="27" height="27"><circle cx="6.75" cy="6.75" r="3.4" fill="#cf3f58"/><circle cx="20.25" cy="20.25" r="3.4" fill="#cf3f58"/></pattern></defs>
<circle cx="364.0" cy="461.0" r="235.5" fill="none" stroke="rgba(205,205,205,0.45)" stroke-width="5"/>
<circle cx="357.5" cy="1002.0" r="339.5" fill="none" stroke="rgba(205,205,205,0.45)" stroke-width="5"/>
<circle cx="430.5" cy="1612.5" r="305.0" fill="none" stroke="rgba(205,205,205,0.45)" stroke-width="5"/>
<circle cx="4102.0" cy="454.5" r="235.5" fill="none" stroke="rgba(205,205,205,0.45)" stroke-width="5"/>
<circle cx="4160.0" cy="1001.0" r="337.5" fill="none" stroke="rgba(205,205,205,0.45)" stroke-width="5"/>
<circle cx="4083.5" cy="1609.0" r="303.0" fill="none" stroke="rgba(205,205,205,0.45)" stroke-width="5"/>
<circle cx="364.0" cy="461.0" r="233.0" fill="#f5b3be"/>
<circle cx="364.0" cy="461.0" r="222.2" fill="none" stroke="url(#dots)" stroke-width="17.5"/>
<circle cx="357.5" cy="1002.0" r="337.0" fill="#f5b3be"/>
<circle cx="357.5" cy="1002.0" r="321.5" fill="none" stroke="url(#dots)" stroke-width="27.0"/>
<circle cx="430.5" cy="1612.5" r="302.5" fill="#f5b3be"/>
<circle cx="430.5" cy="1612.5" r="289.2" fill="none" stroke="url(#dots)" stroke-width="22.5"/>
<circle cx="4102.0" cy="454.5" r="233.0" fill="#f5b3be"/>
<circle cx="4102.0" cy="454.5" r="222.2" fill="none" stroke="url(#dots)" stroke-width="17.5"/>
<circle cx="4160.0" cy="1001.0" r="335.0" fill="#f5b3be"/>
<circle cx="4160.0" cy="1001.0" r="320.2" fill="none" stroke="url(#dots)" stroke-width="25.5"/>
<circle cx="4083.5" cy="1609.0" r="300.5" fill="#f5b3be"/>
<circle cx="4083.5" cy="1609.0" r="287.2" fill="none" stroke="url(#dots)" stroke-width="22.5"/>
<clipPath id="cp0"><circle cx="364.0" cy="461.0" r="212.5"/></clipPath>
<circle cx="364.0" cy="461.0" r="212.5" fill="#f3ebe4"/>
<g clip-path="url(#cp0)"><path d="M172.8 652.2 Q339.6 594.9 342.8 418.5 Q175.9 475.9 172.8 652.2 Z" fill="#f0e4d3"/><path d="M385.2 673.5 Q519.1 594.9 512.8 439.8 Q378.9 518.4 385.2 673.5 Z" fill="#f0e4d3"/><path d="M300.2 248.5 Q358.7 344.1 470.2 354.8 Q411.8 259.1 300.2 248.5 Z" fill="#f0e4d3"/><path d="M172.8 397.2 Q285.4 378.1 321.5 269.8 Q208.9 288.9 172.8 397.2 Z" fill="#f0e4d3"/><path d="M353.4 248.5 Q385.2 461.0 364.0 673.5" fill="none" stroke="#f0e4d3" stroke-width="9.6"/></g>
<clipPath id="cp1"><circle cx="357.5" cy="1002.0" r="307.0"/></clipPath>
<circle cx="357.5" cy="1002.0" r="307.0" fill="#f3ebe4"/>
<g clip-path="url(#cp1)"><path d="M342.1 1063.4 Q303.8 883.8 127.2 833.1 Q165.6 1012.7 342.1 1063.4 Z" fill="#f0e4d3"/><path d="M372.9 1002.0 Q526.7 997.4 603.1 863.9 Q449.3 868.5 372.9 1002.0 Z" fill="#f0e4d3"/><path d="M342.1 1232.2 Q270.0 1074.1 96.6 1063.4 Q168.7 1221.5 342.1 1232.2 Z" fill="#f0e4d3"/><path d="M372.9 1186.2 Q522.5 1193.9 618.5 1078.8 Q468.8 1071.1 372.9 1186.2 Z" fill="#f0e4d3"/><path d="M342.1 695.0 Q388.2 1002.0 357.5 1309.0" fill="none" stroke="#f0e4d3" stroke-width="13.8"/></g>
<clipPath id="cp2"><circle cx="430.5" cy="1612.5" r="277.0"/></clipPath>
<circle cx="430.5" cy="1612.5" r="277.0" fill="#f3ebe4"/>
<g clip-path="url(#cp2)"><path d="M153.5 1654.0 Q303.4 1740.2 444.4 1640.2 Q294.5 1554.1 153.5 1654.0 Z" fill="#f0e4d3"/><path d="M596.7 1834.1 Q680.6 1635.5 555.1 1460.2 Q471.2 1658.8 596.7 1834.1 Z" fill="#f0e4d3"/><path d="M222.8 1404.8 Q280.9 1528.3 416.6 1543.2 Q358.5 1419.7 222.8 1404.8 Z" fill="#f0e4d3"/><path d="M416.6 1335.5 Q458.2 1612.5 430.5 1889.5" fill="none" stroke="#f0e4d3" stroke-width="12.5"/></g>
<clipPath id="cp3"><circle cx="4102.0" cy="454.5" r="212.5"/></clipPath>
<circle cx="4102.0" cy="454.5" r="212.5" fill="#f3ebe4"/>
<g clip-path="url(#cp3)"><path d="M3910.8 497.0 Q4027.6 494.9 4080.8 390.8 Q3963.9 392.9 3910.8 497.0 Z" fill="#f0e4d3"/><path d="M4144.5 656.4 Q4263.5 590.5 4261.4 454.5 Q4142.4 520.4 4144.5 656.4 Z" fill="#f0e4d3"/><path d="M4059.5 242.0 Q4123.2 327.0 4229.5 327.0 Q4165.8 242.0 4059.5 242.0 Z" fill="#f0e4d3"/><path d="M3932.0 624.5 Q4042.1 602.4 4080.8 497.0 Q3970.7 519.1 3932.0 624.5 Z" fill="#f0e4d3"/><path d="M4091.4 242.0 Q4123.2 454.5 4102.0 667.0" fill="none" stroke="#f0e4d3" stroke-width="9.6"/></g>
<clipPath id="cp4"><circle cx="4160.0" cy="1001.0" r="306.5"/></clipPath>
<circle cx="4160.0" cy="1001.0" r="306.5" fill="#f3ebe4"/>
<g clip-path="url(#cp4)"><path d="M4129.4 1123.6 Q4113.1 929.6 3930.1 863.1 Q3946.4 1057.1 4129.4 1123.6 Z" fill="#f0e4d3"/><path d="M4190.6 1031.7 Q4347.0 1031.7 4420.5 893.7 Q4264.2 893.7 4190.6 1031.7 Z" fill="#f0e4d3"/><path d="M4129.4 1307.5 Q4078.8 1131.3 3899.5 1093.0 Q3950.0 1269.2 4129.4 1307.5 Z" fill="#f0e4d3"/><path d="M4190.6 1261.5 Q4360.5 1245.9 4435.9 1093.0 Q4266.0 1108.6 4190.6 1261.5 Z" fill="#f0e4d3"/><path d="M4144.7 694.5 Q4190.6 1001.0 4160.0 1307.5" fill="none" stroke="#f0e4d3" stroke-width="13.8"/></g>
<clipPath id="cp5"><circle cx="4083.5" cy="1609.0" r="275.0"/></clipPath>
<circle cx="4083.5" cy="1609.0" r="275.0" fill="#f3ebe4"/>
<g clip-path="url(#cp5)"><path d="M4028.5 1856.5 Q4023.0 1647.5 3836.0 1554.0 Q3841.5 1763.0 4028.5 1856.5 Z" fill="#f0e4d3"/><path d="M4083.5 1664.0 Q4240.2 1683.2 4331.0 1554.0 Q4174.2 1534.8 4083.5 1664.0 Z" fill="#f0e4d3"/><path d="M4138.5 1856.5 Q4258.8 1839.3 4317.2 1732.8 Q4196.9 1749.9 4138.5 1856.5 Z" fill="#f0e4d3"/><path d="M4056.0 1334.0 Q4089.0 1450.9 4193.5 1512.8 Q4160.5 1395.9 4056.0 1334.0 Z" fill="#f0e4d3"/><path d="M4069.8 1334.0 Q4111.0 1609.0 4083.5 1884.0" fill="none" stroke="#f0e4d3" stroke-width="12.4"/></g>
<g transform="translate(4080 955)"><path d="M64.4 36.4 C58 22 48 10 36 10.8 C22 11.5 11 22 12.5 40 C14 58 30 78 45 92 C55 101 63 108 67.8 113.3 C72 104 82 90 96.8 74 C110 60 120 48 119 34 C118 20 106 13 96.8 15.9 C84 19 72 28 64.4 36.4 Z" fill="#f12b2b"/><path d="M43.3 19.4 L24.5 29.6 M47 25 L23 42 M50 31 L25 50 M53.5 37.6 L34 61.5 M57 47.8 L43.3 72.9 M59.2 57 L49 79.7 M106 20.5 L77.4 35.3 M109.3 34.2 L100.2 42.1 M110.5 44.4 L87.7 61.5 M88.8 50.1 L58.1 87.7" stroke="#fbe3da" stroke-width="1.7" stroke-linecap="round" opacity="0.9"/></g>
</svg>
<div id="t96" class="t" style="left:213.76px;top:320.77px;font-size:53.779px;line-height:53.779px;color:#231f1c;font-weight:700;transform:scaleX(1.1185);"><span>One price,</span></div>
<div id="t97" class="t" style="left:189.86px;top:392.37px;font-size:53.779px;line-height:53.779px;color:#231f1c;font-weight:700;transform:scaleX(1.1427);"><span>all features.</span></div>
<div id="t98" class="t" style="left:168.20px;top:465.47px;font-size:53.779px;line-height:53.779px;color:#231f1c;font-weight:700;transform:scaleX(1.1011);"><span>No expensive</span></div>
<div id="t99" class="t" style="left:235.68px;top:534.97px;font-size:53.779px;line-height:53.779px;color:#231f1c;font-weight:700;transform:scaleX(1.1050);"><span>upgrades</span></div>
<div id="t100" class="t" style="left:177.48px;top:760.12px;font-size:65.407px;line-height:65.407px;color:#231f1c;font-weight:700;transform:scaleX(1.1307);"><span>Metadata,</span></div>
<div id="t101" class="t" style="left:86.72px;top:846.32px;font-size:65.407px;line-height:65.407px;color:#231f1c;font-weight:700;transform:scaleX(1.1379);"><span>ONIX, royalties,</span></div>
<div id="t102" class="t" style="left:107.29px;top:932.52px;font-size:65.407px;line-height:65.407px;color:#231f1c;font-weight:700;transform:scaleX(1.1022);"><span>rights, project</span></div>
<div id="t103" class="t" style="left:128.39px;top:1018.62px;font-size:65.407px;line-height:65.407px;color:#231f1c;font-weight:700;transform:scaleX(1.1024);"><span>management,</span></div>
<div id="t104" class="t" style="left:139.28px;top:1104.62px;font-size:65.407px;line-height:65.407px;color:#231f1c;font-weight:700;transform:scaleX(1.0807);"><span>production &amp;</span></div>
<div id="t105" class="t" style="left:199.53px;top:1189.62px;font-size:65.407px;line-height:65.407px;color:#231f1c;font-weight:700;transform:scaleX(1.1170);"><span>reporting</span></div>
<div id="t106" class="t" style="left:234.55px;top:1479.01px;font-size:75.581px;line-height:75.581px;color:#231f1c;font-weight:700;transform:scaleX(1.0758);"><span>Standards</span></div>
<div id="t107" class="t" style="left:204.87px;top:1579.01px;font-size:75.581px;line-height:75.581px;color:#231f1c;font-weight:700;transform:scaleX(1.0640);"><span>– plus your</span></div>
<div id="t108" class="t" style="left:255.38px;top:1677.71px;font-size:75.581px;line-height:75.581px;color:#231f1c;font-weight:700;transform:scaleX(1.0620);"><span>own way!</span></div>
<div id="t109" class="t" style="left:3995.19px;top:306.30px;font-size:52.326px;line-height:52.326px;color:#231f1c;font-weight:700;transform:scaleX(1.1122);"><span>Secure.</span></div>
<div id="t110" class="t" style="left:3926.86px;top:379.70px;font-size:52.326px;line-height:52.326px;color:#231f1c;font-weight:700;transform:scaleX(1.1434);"><span>Accessible.</span></div>
<div id="t111" class="t" style="left:3918.39px;top:452.30px;font-size:52.326px;line-height:52.326px;color:#231f1c;font-weight:700;transform:scaleX(1.1701);"><span>High quality.</span></div>
<div id="t112" class="t" style="left:3961.00px;top:523.30px;font-size:52.326px;line-height:52.326px;color:#231f1c;font-weight:700;transform:scaleX(1.1657);"><span>Beautiful.</span></div>
<div id="t113" class="t" style="left:3950.81px;top:856.19px;font-size:85.756px;line-height:85.756px;color:#231f1c;font-weight:700;transform:scaleX(1.0640);"><span>One team</span></div>
<div id="t114" class="t" style="left:3953.84px;top:1071.39px;font-size:85.756px;line-height:85.756px;color:#231f1c;font-weight:700;transform:scaleX(1.0543);"><span>One truth</span></div>
<div id="t115" class="t" style="left:3969.55px;top:1461.39px;font-size:66.860px;line-height:66.860px;color:#231f1c;font-weight:700;transform:scaleX(1.0125);"><span>PLUS!</span></div>
<div id="t116" class="t" style="left:3889.50px;top:1545.39px;font-size:66.860px;line-height:66.860px;color:#231f1c;font-weight:700;transform:scaleX(1.0953);"><span>So flexible</span></div>
<div id="t117" class="t" style="left:3907.74px;top:1632.39px;font-size:66.860px;line-height:66.860px;color:#231f1c;font-weight:700;transform:scaleX(1.0656);"><span>under the</span></div>
<div id="t118" class="t" style="left:3975.20px;top:1719.39px;font-size:66.860px;line-height:66.860px;color:#231f1c;font-weight:700;transform:scaleX(1.0492);"><span>hood!</span></div>
<div class="r" style="left:0;top:0;width:4500px;height:56px;background:#fff"></div><div class="r" style="left:0;top:1911px;width:4500px;height:6px;background:#fff"></div><div class="r" style="left:0;top:0;width:17px;height:1917px;background:#fff"></div><div class="r" style="left:4496px;top:0;width:4px;height:1917px;background:#fff"></div>
</body></html>
